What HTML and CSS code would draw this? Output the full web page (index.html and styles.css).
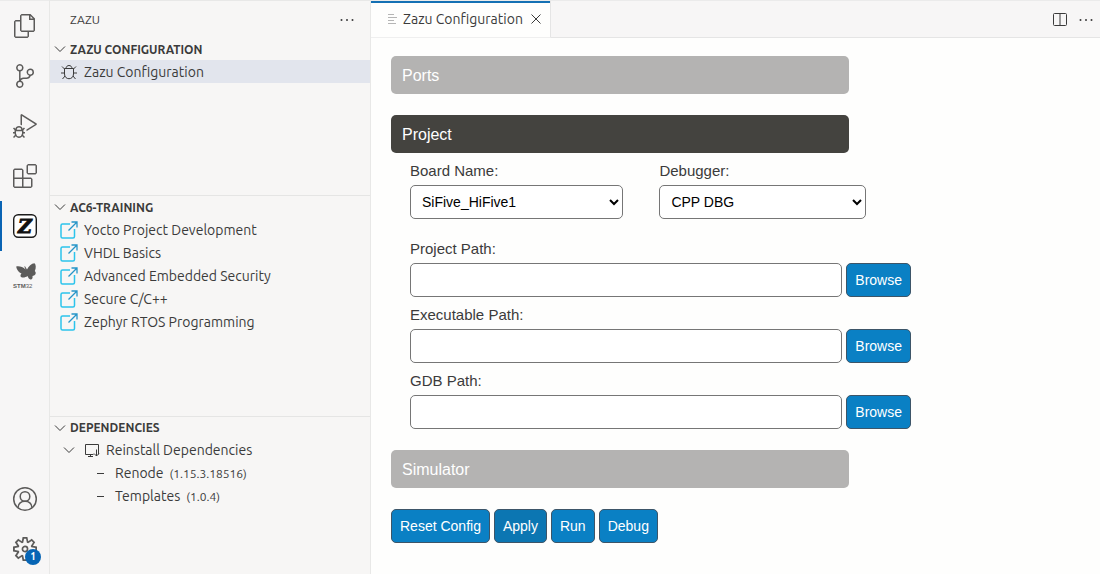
FILE: index.html
```html
<!DOCTYPE html>
<html lang="en">
<head>
    <meta charset="UTF-8">
    <meta name="viewport" content="width=device-width, initial-scale=1.0">
    <title>Zazu Configuration</title>
    <link rel="stylesheet" href="styles.css">
</head>
<body>
    <!-- Shared icons -->
    <svg class="icon-defs" aria-hidden="true">
        <symbol id="chevron" viewBox="0 0 12 12"><path d="M1 3.5l5 5 5-5" fill="none" stroke="currentColor"/></symbol>
        <symbol id="dots" viewBox="0 0 16 16"><circle cx="2.5" cy="8" r="1"/><circle cx="8" cy="8" r="1"/><circle cx="13.5" cy="8" r="1"/></symbol>
        <symbol id="external" viewBox="0 0 18 18">
            <path d="M10 3H2.5Q1 3 1 4.500V15.500Q1 17 2.500 17H13Q14.500 17 14.500 15.500V8" fill="none" stroke="#2cc4ec" stroke-width="1.500"/>
            <path d="M8.500 9.500L16.500 1.500M11.500 1H17V6.500" fill="none" stroke="#2795c8" stroke-width="1.300"/>
        </symbol>
    </svg>

    <nav class="activity-bar">
        <button type="button" aria-label="Explorer">
            <svg viewBox="0 0 24 24"><path d="M17.5 0h-9L7 1.5V6H2.500L1 7.500v15.070L2.500 24h12.070L16 22.570V18h4.700l1.300-1.430V4.500L17.500 0zm0 2.120l2.380 2.380H17.500V2.120zm-3 20.380h-12v-15H7v9.070L8.500 18h6v4.500zm6-6h-12v-15H16V6h4.500v10.500z"/></svg>
        </button>
        <button type="button" aria-label="Source Control">
            <svg viewBox="0 0 24 24"><path d="M21.007 8.222A3.738 3.738 0 0 0 15.045 5.2a3.737 3.737 0 0 0 1.156 6.583 2.988 2.988 0 0 1-2.668 1.67h-2.99a4.456 4.456 0 0 0-2.989 1.165V7.4a3.737 3.737 0 1 0-1.494 0v9.117a3.776 3.776 0 1 0 1.816.099 2.99 2.99 0 0 1 2.668-1.667h2.99a4.484 4.484 0 0 0 4.223-3.039 3.736 3.736 0 0 0 3.25-3.687zM4.565 3.738a2.242 2.242 0 1 1 4.484 0 2.242 2.242 0 0 1-4.484 0zm4.484 16.441a2.242 2.242 0 1 1-4.484 0 2.242 2.242 0 0 1 4.484 0zm8.221-9.715a2.242 2.242 0 1 1 0-4.485 2.242 2.242 0 0 1 0 4.485z"/></svg>
        </button>
        <button type="button" aria-label="Run and Debug">
            <svg viewBox="0 0 24 24"><path d="M10.94 13.5l-1.32 1.32a3.73 3.73 0 0 0-7.24 0L1.06 13.5 0 14.56l1.72 1.72-.22.22V18H0v1.5h1.5v.08c.077.489.214.966.41 1.42L0 22.94 1.06 24l1.65-1.65A4.308 4.308 0 0 0 6 24a4.31 4.31 0 0 0 3.29-1.65L10.94 24 12 22.94 10.09 21c.198-.464.336-.951.41-1.45v-.1H12V18h-1.5v-1.5l-.22-.22L12 14.56l-1.06-1.06zM6 13.5a2.25 2.25 0 0 1 2.25 2.25h-4.5A2.25 2.25 0 0 1 6 13.5zm3 6a3.33 3.33 0 0 1-3 3 3.33 3.33 0 0 1-3-3v-2.25h6v2.25zm14.76-9.9v1.26L13.5 17.37V15.6l8.5-5.37L9 2v9.46a5.07 5.07 0 0 0-1.5-.72V.63L8.64 0l15.12 9.6z"/></svg>
        </button>
        <button type="button" aria-label="Extensions">
            <svg viewBox="0 0 24 24"><path d="M13.5 1.5L15 0h7.5L24 1.5V9l-1.5 1.5H15L13.5 9V1.5zm1.5 0V9h7.5V1.5H15zM0 15V6l1.5-1.5H9L10.5 6v7.5H18l1.5 1.5v7.5L18 24H1.5L0 22.5V15zm9-1.5V6H1.5v7.5H9zM9 15H1.5v7.5H9V15zm1.5 7.5H18V15h-7.5v7.5z"/></svg>
        </button>
        <button type="button" class="active" aria-label="Zazu">
            <svg viewBox="0 0 24 24"><rect x="0.7" y="0.7" width="22.6" height="22.6" rx="4.500" fill="#fff" stroke="#1b1b1b" stroke-width="1.4"/><text class="logo-z" x="12" y="19" text-anchor="middle">Z</text></svg>
        </button>
        <button type="button" aria-label="STM32">
            <svg viewBox="0 0 24 24">
                <path d="M14 5.500C15.500 2 18.500 -0.500 21.500 -0.800C23 0.500 23.300 4 21.800 7C23 8 23.300 10 21.500 11.200C20.500 11.500 20 11.700 19.500 12C20 14 19 15.800 17.500 15.500C16 15 15 13.500 14.500 12C12.500 13.500 10 14 8 13C7 12 7.500 10.500 8.500 9.500C6 8.500 3.500 5.500 3.200 2.500C6 1.800 10 2.800 12.500 5.500L11.300 2.500L12 2.300Z"/>
                <text class="logo-stm" x="0" y="24">STM<tspan class="logo-32">32</tspan></text>
            </svg>
        </button>
        <button type="button" class="accounts" aria-label="Accounts">
            <svg viewBox="0 0 24 24" class="outline"><circle cx="12" cy="12" r="11.3"/><circle cx="12" cy="9.500" r="4.800"/><path d="M5 20.500C5.500 16.500 8 14.300 12 14.300S18.500 16.500 19 20.500"/></svg>
        </button>
        <button type="button" aria-label="Manage">
            <svg viewBox="0 0 24 24"><path d="M19.85 8.75l4.15.83v4.84l-4.15.83 2.35 3.52-3.43 3.43-3.52-2.35-.83 4.15H9.58l-.83-4.15-3.52 2.35-3.43-3.43 2.35-3.52L0 14.42V9.58l4.15-.83L1.8 5.23 5.23 1.8l3.52 2.35L9.58 0h4.84l.83 4.15 3.52-2.35 3.43 3.43-2.35 3.52zm-1.57 5.07l4-.81v-2l-4-.81-.54-1.3 2.29-3.43-1.43-1.43-3.43 2.29-1.3-.54-.81-4h-2l-.81 4-1.3.54-3.43-2.29-1.43 1.43L6.38 8.9l-.54 1.3-4 .81v2l4 .81.54 1.3-2.29 3.43 1.43 1.43 3.43-2.29 1.3.54.81 4h2l.81-4 1.3-.54 3.43 2.29 1.43-1.43-2.29-3.43.54-1.3zm-8.186-4.672A3.43 3.43 0 0 1 12 8.57 3.44 3.44 0 0 1 15.43 12a3.43 3.43 0 1 1-5.336-2.852zm.956 4.274c.281.188.612.288.95.288A1.7 1.7 0 0 0 13.71 12a1.71 1.71 0 1 0-2.66 1.422z"/></svg>
            <span class="badge">1</span>
        </button>
    </nav>

    <aside class="sidebar">
        <header class="sidebar-title">
            <span>ZAZU</span>
            <button type="button" class="icon-btn" aria-label="Views and More Actions"><svg><use href="#dots"/></svg></button>
        </header>

        <section class="pane">
            <h2><svg class="chevron"><use href="#chevron"/></svg>ZAZU CONFIGURATION</h2>
            <ul>
                <li class="selected">
                    <svg class="tree-icon outline" viewBox="0 0 18 18"><path d="M6 5.500C6 1.500 12 1.500 12 5.500M4.500 5.500H13.500V11C13.500 17.300 4.500 17.300 4.500 11ZM4.500 6L2 3.500M13.500 6L16 3.500M4.500 10H1M13.500 10H17M5 13L2.500 16M13 13L15.500 16"/></svg>
                    Zazu Configuration
                </li>
            </ul>
        </section>

        <section class="pane pane-large">
            <h2><svg class="chevron"><use href="#chevron"/></svg>AC6-TRAINING</h2>
            <ul>
                <li><svg class="tree-icon"><use href="#external"/></svg><a href="#yocto">Yocto Project Development</a></li>
                <li><svg class="tree-icon"><use href="#external"/></svg><a href="#vhdl">VHDL Basics</a></li>
                <li><svg class="tree-icon"><use href="#external"/></svg><a href="#security">Advanced Embedded Security</a></li>
                <li><svg class="tree-icon"><use href="#external"/></svg><a href="#secure-c">Secure C/C++</a></li>
                <li><svg class="tree-icon"><use href="#external"/></svg><a href="#zephyr">Zephyr RTOS Programming</a></li>
            </ul>
        </section>

        <section class="pane">
            <h2><svg class="chevron"><use href="#chevron"/></svg>DEPENDENCIES</h2>
            <ul>
                <li class="parent">
                    <svg class="chevron"><use href="#chevron"/></svg>
                    <svg class="install-icon outline" viewBox="0 0 16 16"><path d="M9.500 12.500H1.500V2.500H14.500V12.500M4 14.500H9M6.500 12.500V14.500M12.500 7.500V14M10 11.500L12.500 14L15 11.500"/></svg>
                    Reinstall Dependencies
                </li>
                <li class="child"><span class="dash"></span>Renode <small>(1.15.3.18516)</small></li>
                <li class="child"><span class="dash"></span>Templates <small>(1.0.4)</small></li>
            </ul>
        </section>
    </aside>

    <main class="editor">
        <div class="tab-bar">
            <div class="tab">
                <svg class="file-icon" viewBox="0 0 10 12"><path d="M0 1.500H6M0 4.500H9M0 7.500H6M0 10.500H8" fill="none" stroke="#b5b5b5"/></svg>
                <span>Zazu Configuration</span>
                <button type="button" class="close-btn" aria-label="Close"><svg viewBox="0 0 10 10" class="outline"><path d="M0.500 0.500L9.500 9.500M9.500 0.500L0.500 9.500"/></svg></button>
            </div>
            <div class="tab-actions">
                <button type="button" class="icon-btn" aria-label="Split Editor"><svg viewBox="0 0 16 16" class="outline"><rect x="1.500" y="1.500" width="13" height="12" rx="1"/><path d="M8 1.500V13.500"/></svg></button>
                <button type="button" class="icon-btn" aria-label="More Actions"><svg><use href="#dots"/></svg></button>
            </div>
        </div>

        <form class="config-form">
            <button type="button" class="collapsible">Ports</button>
            <div class="group">
                <button type="button" class="collapsible open">Project</button>
                <div class="content">
                    <div class="select-row">
                        <div class="field">
                            <label for="board">Board Name:</label>
                            <select id="board" name="board"><option>SiFive_HiFive1</option></select>
                        </div>
                        <div class="field">
                            <label for="debugger">Debugger:</label>
                            <select id="debugger" name="debugger"><option>CPP DBG</option></select>
                        </div>
                    </div>
                    <div class="paths">
                        <div class="field">
                            <label for="projectPath">Project Path:</label>
                            <div class="path-row"><input type="text" id="projectPath" name="projectPath"><button type="button" class="btn">Browse</button></div>
                        </div>
                        <div class="field">
                            <label for="executablePath">Executable Path:</label>
                            <div class="path-row"><input type="text" id="executablePath" name="executablePath"><button type="button" class="btn">Browse</button></div>
                        </div>
                        <div class="field">
                            <label for="gdbPath">GDB Path:</label>
                            <div class="path-row"><input type="text" id="gdbPath" name="gdbPath"><button type="button" class="btn">Browse</button></div>
                        </div>
                    </div>
                </div>
            </div>
            <button type="button" class="collapsible">Simulator</button>
            <div class="actions">
                <button type="button" class="btn">Reset Config</button>
                <button type="button" class="btn btn-apply">Apply</button>
                <button type="button" class="btn">Run</button>
                <button type="button" class="btn">Debug</button>
            </div>
        </form>
    </main>
</body>
</html>
```
FILE: styles.css
```css
* {
    box-sizing: border-box;
}
body {
    margin: 0;
    height: 100vh;
    display: flex;
    font-family: Ubuntu, "Noto Sans", sans-serif;
    font-size: 14px;
    color: #3b3b3b;
    background-color: #fefefd;
}
button {
    font-family: inherit;
    cursor: pointer;
}
svg {
    display: block;
    flex: none;
    fill: currentColor;
}
.icon-defs {
    position: absolute;
    width: 0;
    height: 0;
}
.outline {
    fill: none;
    stroke: currentColor;
}

/* Activity bar */
.activity-bar {
    flex: none;
    width: 49px;
    display: flex;
    flex-direction: column;
    background-color: #f7f6f6;
    border-top: 1px solid #ebebeb;
}
.activity-bar button {
    position: relative;
    height: 50px;
    padding: 0 0 0 11px;
    border: none;
    border-left: 2px solid transparent;
    background: none;
    color: #5c5b5a;
}
.activity-bar svg {
    width: 24px;
    height: 24px;
    overflow: visible;
}
.activity-bar .outline {
    stroke-width: 1.5;
}
.activity-bar .active {
    border-left-color: #0a64b4;
}
.activity-bar .accounts {
    margin-top: auto;
}
.logo-z {
    font: italic bold 19px "DejaVu Serif", serif;
    fill: #111;
    stroke: #111;
}
.logo-stm {
    font: bold 6px "Liberation Sans", sans-serif;
}
.logo-32 {
    font-weight: normal;
}
.badge {
    position: absolute;
    right: 8px;
    bottom: 9px;
    width: 16px;
    height: 16px;
    border-radius: 50%;
    background-color: #0765b5;
    color: #fff;
    font-size: 10px;
    font-weight: bold;
    line-height: 16px;
    text-align: center;
}

/* Sidebar */
.sidebar {
    flex: none;
    width: 322px;
    display: flex;
    flex-direction: column;
    background-color: #f7f6f5;
    border: 1px solid #e8e8e7;
    border-bottom: none;
}
.sidebar-title {
    flex: none;
    height: 37px;
    padding: 0 15px 0 20px;
    display: flex;
    align-items: center;
    justify-content: space-between;
    font-size: 12px;
}
.icon-btn {
    padding: 0;
    border: none;
    background: none;
    color: #3b3b3b;
}
.icon-btn svg {
    width: 16px;
    height: 16px;
}
.pane {
    flex: 5 0 0;
}
.pane + .pane {
    border-top: 1px solid #e5e5e4;
}
.pane-large {
    flex-grow: 7;
}
.pane h2 {
    margin: 0;
    padding-left: 4px;
    height: 22px;
    display: flex;
    align-items: center;
    gap: 4px;
    font-size: 12px;
}
.chevron {
    width: 12px;
    height: 12px;
}
.pane ul {
    margin: 0;
    padding: 0;
    list-style: none;
}
.pane li {
    height: 23px;
    padding-left: 10px;
    display: flex;
    align-items: center;
    gap: 6px;
}
.pane li a {
    color: inherit;
    text-decoration: none;
}
.pane .selected {
    background-color: #e2e5ed;
}
.tree-icon {
    width: 18px;
    height: 18px;
}
.parent .chevron {
    margin: 0 3px;
}
.install-icon {
    width: 16px;
    height: 16px;
}
.pane .child {
    padding-left: 47px;
}
.dash {
    width: 7px;
    height: 1px;
    margin-right: 5px;
    background-color: #3b3b3b;
}
.child small {
    font-size: 12px;
}

/* Editor */
.editor {
    flex: 1;
    min-width: 0;
}
.tab-bar {
    height: 38px;
    display: flex;
    justify-content: space-between;
    background-color: #f7f6f6;
    border-top: 1px solid #ebebeb;
    box-shadow: inset 0 -1px #e5e5e5;
}
.tab {
    padding: 0 9px 0 17px;
    display: flex;
    align-items: center;
    gap: 5px;
    background-color: #fefefd;
    border-right: 1px solid #e5e5e5;
    border-bottom: 1px solid #efefef;
    box-shadow: inset 0 2px #1470b4;
}
.file-icon {
    width: 10px;
    height: 12px;
}
.close-btn {
    padding: 0 0 0 3px;
    border: none;
    background: none;
    color: #3b3b3b;
}
.close-btn svg {
    width: 10px;
    height: 10px;
}
.tab-actions {
    padding-right: 6px;
    display: flex;
    align-items: center;
    gap: 10px;
}

/* Configuration form */
.config-form {
    max-width: 560px;
    padding: 18px 20px;
    display: flex;
    flex-direction: column;
    gap: 21px;
    font-family: "Liberation Sans", Arial, sans-serif;
}
.collapsible {
    display: block;
    width: 88%;
    height: 38px;
    padding: 1px 11px 0;
    border: none;
    border-radius: 5px;
    background-color: #b4b3b2;
    color: #fff;
    font-size: 16px;
    text-align: left;
}
.collapsible.open {
    background-color: #44433f;
}
.content {
    padding: 9px 0 0 19px;
}
.select-row {
    width: 91%;
    display: grid;
    grid-template-columns: 31fr 30fr;
    gap: 36px;
    margin-bottom: 21px;
}
.paths {
    display: flex;
    flex-direction: column;
    gap: 9px;
}
.field {
    display: flex;
    flex-direction: column;
    gap: 5px;
}
label {
    font-size: 15px;
    line-height: 18px;
}
select, input {
    height: 34px;
    min-width: 0;
    border: 1px solid #767676;
    border-radius: 5px;
    background-color: #fff;
    color: #000;
    font-family: inherit;
    font-size: 14px;
}
select {
    width: 100%;
    padding-left: 7px;
}
input {
    flex: 1;
    padding: 0 10px;
}
.path-row, .actions {
    display: flex;
    gap: 4px;
}
.btn {
    height: 34px;
    padding: 0 8px;
    border: 1px solid #3d5568;
    border-radius: 5px;
    background-color: #0a80c4;
    color: #fff;
    font-size: 14px;
}
.btn-apply {
    background-color: #0c76b2;
}
```
